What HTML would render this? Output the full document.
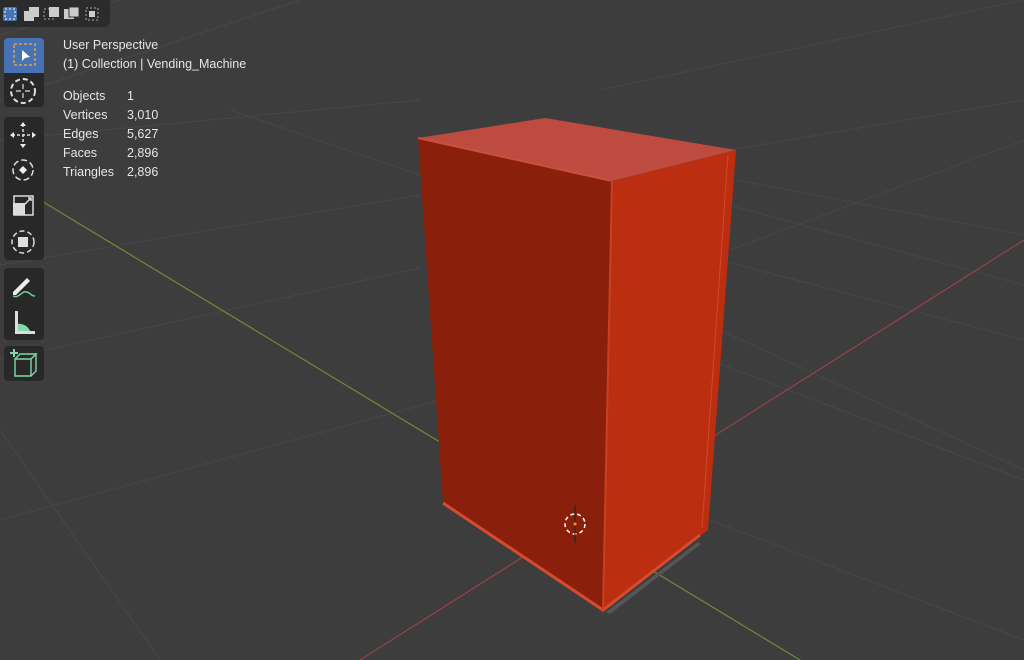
<!DOCTYPE html>
<html><head><meta charset="utf-8"><style>
body{margin:0;width:1024px;height:660px;overflow:hidden;background:#3d3d3d;font-family:"Liberation Sans",sans-serif;position:relative}
svg.bg{position:absolute;left:0;top:0}
.hdr{position:absolute;left:0;top:0;width:110px;height:27px;background:#2b2b2b;border-radius:0 0 6px 0}
.tb{position:absolute;left:4px;width:40px;background:#282828;border-radius:4px}
.info{position:absolute;left:63px;color:#e6e6e6;font-size:12.5px;line-height:19px}
.btn{position:absolute;left:4px;width:40px;height:35px}
</style></head><body>
<svg class="bg" width="1024" height="660">
<g stroke="#474747" stroke-width="1" fill="none">
<line x1="0" y1="520" x2="440" y2="400"/>
<line x1="0" y1="360" x2="420" y2="268"/>
<line x1="0" y1="265" x2="420" y2="195"/>
<line x1="120" y1="0" x2="0" y2="35"/>
<line x1="0" y1="430" x2="160" y2="660"/>
<line x1="0" y1="140" x2="420" y2="100"/>
<line x1="710" y1="175" x2="1024" y2="235"/>
<line x1="710" y1="200" x2="1024" y2="285"/>
<line x1="720" y1="260" x2="1024" y2="340"/>
<line x1="720" y1="330" x2="1024" y2="470"/>
<line x1="710" y1="360" x2="1024" y2="480"/>
<line x1="710" y1="520" x2="1024" y2="640"/>
<line x1="730" y1="250" x2="1024" y2="140"/>
<line x1="730" y1="150" x2="1024" y2="100"/>
<line x1="600" y1="90" x2="1024" y2="0"/>
<line x1="0" y1="100" x2="300" y2="0"/>
<line x1="230" y1="110" x2="420" y2="175"/>
</g>
<line x1="40" y1="200" x2="800" y2="660" stroke="#6d8a33" stroke-width="1.2"/>
<line x1="360" y1="660" x2="1024" y2="240" stroke="#9a4049" stroke-width="1.2"/>
<polygon points="606,612 698,542 701,544 610,614" fill="#555"/>
<polygon points="418,138 612,181 603,612 443,503" fill="#8a200b"/>
<polygon points="612,181 736,150 708,530 603,612" fill="#bb2e10"/>
<polygon points="418,138 545,118 736,150 612,181" fill="#bd4b40"/>
<polyline points="443,503 603,610 700,535" fill="none" stroke="#d74a30" stroke-width="3"/>
<line x1="612" y1="182" x2="603" y2="610" stroke="#c94020" stroke-width="2"/>
<line x1="728" y1="155" x2="702" y2="528" stroke="#d04a2d" stroke-width="1"/>
<line x1="418" y1="138" x2="612" y2="181" stroke="#c9503f" stroke-width="2"/>
<circle cx="575" cy="524" r="10" fill="none" stroke="#fff" stroke-width="1.5" stroke-dasharray="4 3"/>
<line x1="575" y1="505" x2="575" y2="543" stroke="#222" stroke-width="1"/>
<circle cx="575" cy="524" r="1.5" fill="#f4a000"/>
</svg>
<div class="hdr">
<svg width="110" height="27">
<rect x="3" y="7" width="14" height="14" fill="#4772b3" rx="2"/><rect x="5" y="9" width="10" height="10" fill="none" stroke="#fff" stroke-dasharray="2 2"/>
<rect x="24" y="11" width="10" height="10" fill="#ccc"/><rect x="29" y="7" width="10" height="10" fill="#ccc"/>
<rect x="44" y="9" width="10" height="10" fill="none" stroke="#aaa" stroke-dasharray="2 2"/><rect x="49" y="7" width="10" height="10" fill="#ccc"/>
<rect x="64" y="9" width="10" height="10" fill="#ccc"/><rect x="69" y="7" width="10" height="10" fill="#ccc" stroke="#333"/>
<rect x="86" y="8" width="12" height="12" fill="none" stroke="#aaa" stroke-dasharray="2 2"/><rect x="89" y="11" width="6" height="6" fill="#ccc"/>
</svg></div>
<div class="tb" style="top:38px;height:69px"></div>
<div class="tb" style="top:117px;height:143px"></div>
<div class="tb" style="top:268px;height:72px"></div>
<div class="tb" style="top:346px;height:35px"></div>
<div class="btn" style="top:38px;background:#4772b3;border-radius:4px 4px 0 0"><svg width="40" height="35"><rect x="10" y="6" width="21" height="21" fill="none" stroke="#e8a040" stroke-width="1.5" stroke-dasharray="3 2"/><path d="M18 12 L18 23 L21 20 L26 19 Z" fill="#fff"/></svg></div>
<div class="btn" style="top:72px"><svg width="40" height="35"><circle cx="19" cy="19" r="12" fill="none" stroke="#ddd" stroke-width="2" stroke-dasharray="5 3"/><path d="M19 12v5M19 21v5M12 19h5M21 19h5" stroke="#ddd" stroke-width="1.2"/></svg></div>
<div class="btn" style="top:117px"><svg width="40" height="35"><path d="M19 7v22M8 18h22" stroke="#ddd" stroke-width="1.5" stroke-dasharray="3 2"/><path d="M19 5l-3 4h6zM19 31l-3-4h6zM6 18l4-3v6zM32 18l-4-3v6z" fill="#eee"/></svg></div>
<div class="btn" style="top:152px"><svg width="40" height="35"><circle cx="19" cy="18" r="10" fill="none" stroke="#ddd" stroke-width="1.5" stroke-dasharray="6 3"/><path d="M19 14l4 4-4 4-4-4z" fill="#eee"/></svg></div>
<div class="btn" style="top:188px"><svg width="40" height="35"><rect x="9" y="15" width="12" height="12" fill="#ddd"/><rect x="10" y="8" width="19" height="19" fill="none" stroke="#ddd" stroke-width="1.5"/><path d="M20 17l7-7M24 10h3v3" stroke="#ddd" stroke-width="1.5" fill="none"/></svg></div>
<div class="btn" style="top:224px"><svg width="40" height="35"><circle cx="19" cy="18" r="11" fill="none" stroke="#ddd" stroke-width="1.5" stroke-dasharray="5 3"/><rect x="14" y="13" width="10" height="10" fill="#ddd"/></svg></div>
<div class="btn" style="top:268px"><svg width="40" height="35"><path d="M9 24l14-14 3 3-14 14h-3z" fill="#eee"/><path d="M9 28c6 3 9-6 14-4s4 4 8 4" stroke="#6fcf9a" stroke-width="1.5" fill="none"/></svg></div>
<div class="btn" style="top:304px"><svg width="40" height="35"><path d="M13 20a12 12 0 0 1 14 10h-14z" fill="#7fdaa7"/><rect x="11" y="7" width="3" height="23" fill="#ddd"/><rect x="11" y="27" width="20" height="3" fill="#ddd"/></svg></div>
<div class="btn" style="top:346px"><svg width="40" height="35"><path d="M11 13h16v17h-16zM11 13l5-5h16l-5 5M32 8v17l-5 5" fill="none" stroke="#7fdaa7" stroke-width="1.4"/><path d="M10 3v8M6 7h8" stroke="#7fdaa7" stroke-width="2"/></svg></div>
<div class="info" style="top:36px">User Perspective<br>(1) Collection | Vending_Machine</div>
<div class="info" style="top:87px">Objects<br>Vertices<br>Edges<br>Faces<br>Triangles</div>
<div class="info" style="top:87px;left:127px">1<br>3,010<br>5,627<br>2,896<br>2,896</div>
</body></html>
